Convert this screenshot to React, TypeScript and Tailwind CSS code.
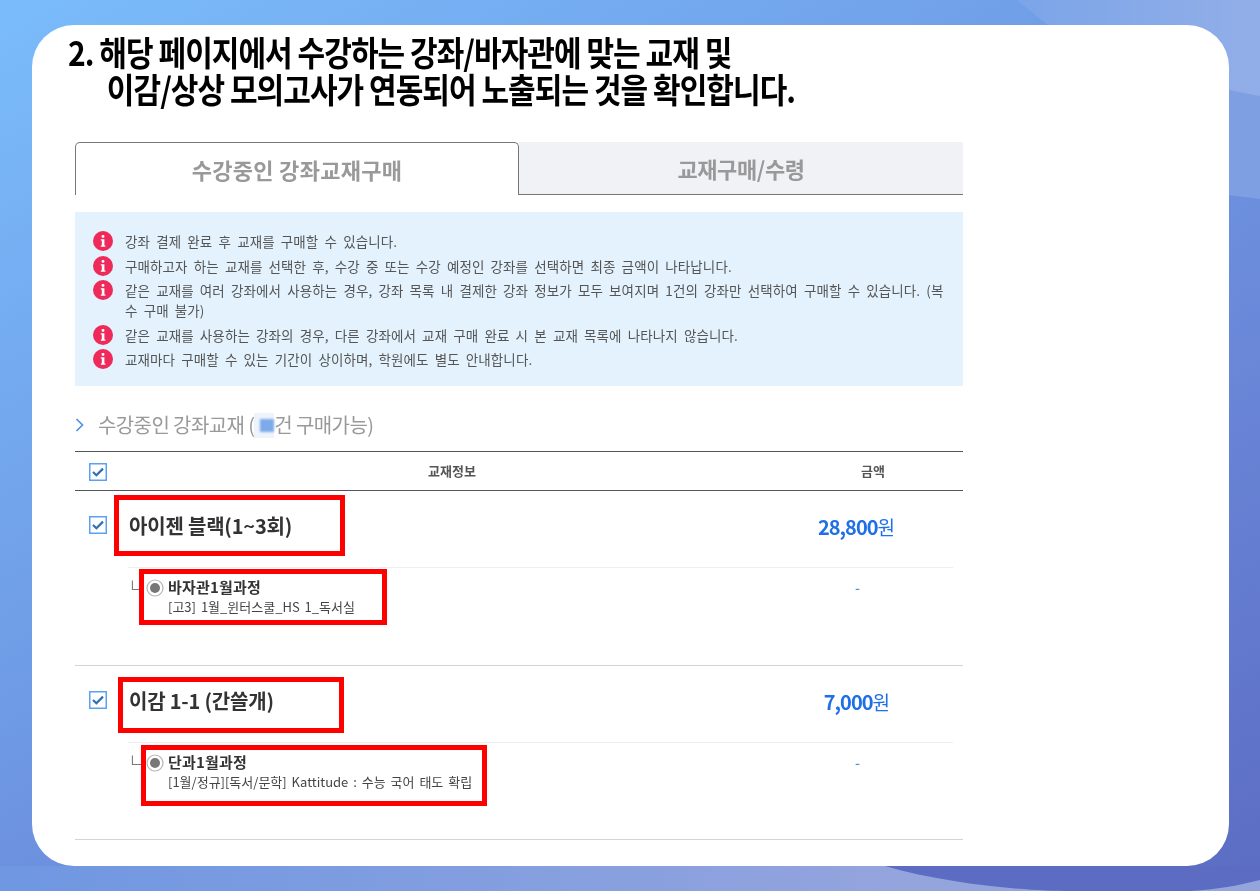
const font = "font-['Noto_Sans_CJK_KR','Noto_Sans',sans-serif]";

const notices = [
  '강좌 결제 완료 후 교재를 구매할 수 있습니다.',
  '구매하고자 하는 교재를 선택한 후, 수강 중 또는 수강 예정인 강좌를 선택하면 최종 금액이 나타납니다.',
  '같은 교재를 여러 강좌에서 사용하는 경우, 강좌 목록 내 결제한 강좌 정보가 모두 보여지며 1건의 강좌만 선택하여 구매할 수 있습니다. (복수 구매 불가)',
  '같은 교재를 사용하는 강좌의 경우, 다른 강좌에서 교재 구매 완료 시 본 교재 목록에 나타나지 않습니다.',
  '교재마다 구매할 수 있는 기간이 상이하며, 학원에도 별도 안내합니다.',
];

function InfoIcon() {
  return (
    <svg width="20" height="20" viewBox="0 0 20 20" className="shrink-0">
      <circle cx="10" cy="10" r="10" fill="#ee2a5b" />
      <rect x="8.6" y="4" width="2.8" height="2.8" rx="1" fill="#fff" />
      <path d="M7.8 8.2h3.6v6.2h1v1.4H7.8v-1.4h1V9.6h-1z" fill="#fff" />
    </svg>
  );
}

function CheckBox() {
  return (
    <svg width="18" height="18" viewBox="0 0 18 18" className="shrink-0">
      <rect x="0.75" y="0.75" width="16.5" height="16.5" fill="#fff" stroke="#5aa2f0" strokeWidth="1.5" />
      <path d="M4 9l3.4 3.2L14 5.6" fill="none" stroke="#2f6fb8" strokeWidth="2.2" />
    </svg>
  );
}

function Radio() {
  return (
    <svg width="18" height="18" viewBox="0 0 18 18" className="mt-[2px] shrink-0">
      <circle cx="9" cy="9" r="8" fill="#fff" stroke="#b5b5b5" strokeWidth="1.2" />
      <circle cx="9" cy="9" r="5" fill="#777" />
    </svg>
  );
}

function BookRow(props: {
  title: string;
  price: string;
  course: string;
  detail: string;
  titleBox: string;
  courseBox: string;
  height: string;
  priceOffset: string;
}) {
  return (
    <div className={`relative border-b border-[#d4d4d4] ${props.height}`}>
      <div className="flex h-[76px] items-start pr-[68px]">
        <div className="ml-[14px] mt-[25px]">
          <CheckBox />
        </div>
        <div className="ml-[22px] mt-[21px] flex-1 text-[20px] leading-[28px] font-bold tracking-[-0.2px] text-[#333]">
          {props.title}
        </div>
        <div className={`mt-[21px] flex items-baseline text-[#1e6fe8] ${props.priceOffset}`}>
          <span className="text-[20px] font-bold tracking-[-1px]">{props.price}</span>
          <span className="text-[19px] font-normal">원</span>
        </div>
      </div>
      <div className="ml-[53px] mr-[10px] flex border-t border-[#eeeeee] pt-[9px]">
        <span className="mt-[-3px] w-[18px] text-[20px] leading-[22px] font-light text-[#777]">ㄴ</span>
        <Radio />
        <div className="ml-[4px] flex-1">
          <div className="text-[15px] leading-[20px] font-bold tracking-[0.2px] text-[#333]">{props.course}</div>
          <div className="text-[13px] leading-[20px] [word-spacing:2px] text-[#444]">{props.detail}</div>
        </div>
        <span className="mr-[93px] text-[14px] leading-[20px] font-medium text-[#4a8fe0]">-</span>
      </div>
      <div className={`absolute border-[5px] border-[#ff0000] ${props.titleBox}`} />
      <div className={`absolute border-[5px] border-[#ff0000] ${props.courseBox}`} />
    </div>
  );
}

export default function App() {
  return (
    <div className={`relative h-[891px] w-[1260px] overflow-hidden bg-[linear-gradient(150deg,#7abcfb_0%,#6f9ce6_42%,#6a87d8_66%,#5b6cc2_100%)] ${font}`}>
      <svg className="absolute inset-0" width="1260" height="891" viewBox="0 0 1260 891">
        <defs>
          <linearGradient id="band" gradientUnits="userSpaceOnUse" x1="1017" y1="0" x2="1260" y2="0">
            <stop offset="0" stopColor="#7ba5e8" />
            <stop offset="1" stopColor="#92aee8" />
          </linearGradient>
          <linearGradient id="foot" gradientUnits="userSpaceOnUse" x1="0" y1="0" x2="900" y2="0">
            <stop offset="0" stopColor="#6f97e2" />
            <stop offset="1" stopColor="#94a4dd" />
          </linearGradient>
        </defs>
        <path d="M1100 90L1229 195L1260 199V90z" fill="#7e9fe2" />
        <path d="M1017 0L1060 35L1229 90L1260 96V0z" fill="url(#band)" />
        <path d="M0 866H1260V891H0z" fill="url(#foot)" />
        <path d="M885 866C950 885 1030 891 1070 891H1190C1220 889 1240 885 1260 880V866z" fill="#5b6cc2" />
      </svg>

      <main className="relative ml-[32px] mt-[25px] h-[841px] w-[1197px] rounded-[42px] bg-white pl-[43px] pt-[8px]">
        <h1 className="ml-[-7px] origin-left scale-x-[0.883] text-[34px] leading-[37px] font-bold tracking-[-1.1px] whitespace-nowrap text-black">
          <div>2. 해당 페이지에서 수강하는 강좌/바자관에 맞는 교재 및</div>
          <div className="pl-[44px]">이감/상상 모의고사가 연동되어 노출되는 것을 확인합니다.</div>
        </h1>

        <div className="mt-[35px] w-[888px] blur-[0.4px]">
          <div className="flex h-[53px]">
            <div className="flex w-[444px] items-center justify-center rounded-t-[5px] border border-b-0 border-[#777] text-[22px] font-bold tracking-[0.3px] text-[#999]">
              수강중인 강좌교재구매
            </div>
            <div className="flex flex-1 items-center justify-center border-b border-[#777] bg-[#f1f2f6] text-[22px] font-bold tracking-[-0.4px] text-[#999]">
              교재구매/수령
            </div>
          </div>

          <ul className="mt-[17px] flex h-[174px] flex-col gap-[4.5px] bg-[#e3f2fd] pt-[19px] pr-[18px] pl-[18px] text-[13.5px] leading-[20px] tracking-[0.1px] [word-spacing:3px] text-[#555]">
            {notices.map((n) => (
              <li key={n} className="flex gap-[12px]">
                <InfoIcon />
                <span className="flex-1">{n}</span>
              </li>
            ))}
          </ul>

          <div className="mt-[25px] flex h-[28px] items-center text-[20px] tracking-[-0.6px] text-[#999]">
            <svg width="10" height="14" viewBox="0 0 10 14" className="mr-[13px] shrink-0">
              <path d="M1.5 1l6 6-6 6" fill="none" stroke="#4a90e2" strokeWidth="1.6" />
            </svg>
            <span>수강중인 강좌교재 (</span>
            <span className="flex h-[25px] w-[20px] items-center justify-end bg-[#eef4fc]">
              <span className="h-[13px] w-[14px] bg-[#7dabea] blur-[1px]" />
            </span>
            <span>건 구매가능)</span>
          </div>

          <div className="mt-[12px] flex h-[40px] items-center border-y border-[#555] pr-[78px] text-[13px] font-bold text-[#555]">
            <div className="ml-[14px] mt-[2px]">
              <CheckBox />
            </div>
            <div className="flex-1 pr-[64px] text-center">교재정보</div>
            <div>금액</div>
          </div>

          <BookRow
            title="아이젠 블랙(1~3회)"
            price="28,800"
            course="바자관1월과정"
            detail="[고3] 1월_윈터스쿨_HS 1_독서실"
            titleBox="left-[39px] top-[4px] h-[61px] w-[231px]"
            courseBox="left-[64px] top-[78px] h-[56px] w-[248px]"
            height="h-[175px]"
            priceOffset="mr-0"
          />
          <BookRow
            title="이감 1-1 (간쓸개)"
            price="7,000"
            course="단과1월과정"
            detail="[1월/정규][독서/문학] Kattitude : 수능 국어 태도 확립"
            titleBox="left-[43px] top-[11px] h-[56px] w-[226px]"
            courseBox="left-[66px] top-[79px] h-[61px] w-[346px]"
            height="h-[174px]"
            priceOffset="mr-[5px]"
          />
        </div>
      </main>
    </div>
  );
}
